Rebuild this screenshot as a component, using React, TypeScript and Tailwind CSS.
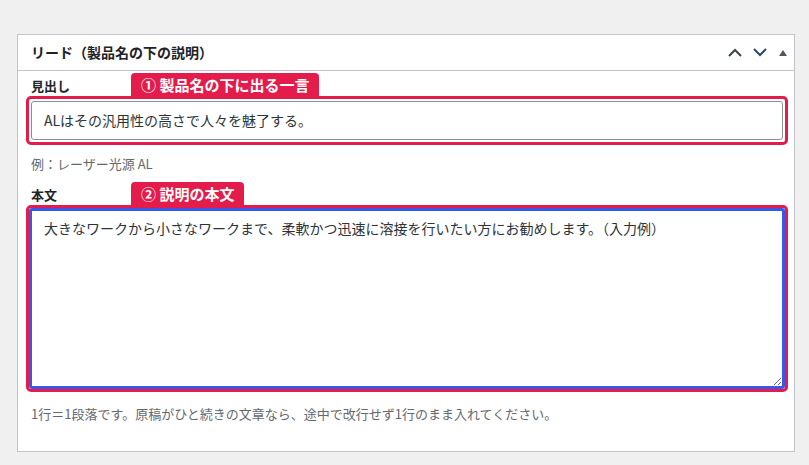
const jp = { fontFamily: '"Noto Sans CJK JP", "Noto Sans", sans-serif' };

function ChevronUp() {
  return (
    <svg width="14" height="9" viewBox="0 0 14 9" className="block">
      <polyline points="1,8 7,2 13,8" fill="none" stroke="#3c434a" strokeWidth="2" />
    </svg>
  );
}

function ChevronDown() {
  return (
    <svg width="14" height="9" viewBox="0 0 14 9" className="block">
      <polyline points="1,1 7,7 13,1" fill="none" stroke="#2c4a66" strokeWidth="2" />
    </svg>
  );
}

function Tag({ children }: { children: React.ReactNode }) {
  return (
    <span className="flex h-[23px] items-center rounded-t-[4px] bg-[#e31c4b] px-[10px] text-[15px] font-bold leading-none text-white">
      {children}
    </span>
  );
}

export default function App() {
  return (
    <div className="min-h-[465px] bg-[#f0f0f0] px-[17px] pt-[34px]" style={jp}>
      <div className="w-[778px] border border-[#c3c4c7] bg-white">
        {/* header */}
        <div className="flex h-[36px] items-center justify-between border-b border-[#c3c4c7] pl-[13px] pr-[7px]">
          <h2 className="text-[14px] font-bold text-[#1d2327]">リード（製品名の下の説明）</h2>
          <div className="flex items-center">
            <ChevronUp />
            <span className="ml-[11px]">
              <ChevronDown />
            </span>
            <span className="ml-[12px] block h-0 w-0 border-x-[4px] border-b-[6px] border-x-transparent border-b-[#50575e]" />
          </div>
        </div>

        {/* body */}
        <div className="px-[8px] pb-[27px] pt-[2px]">
          <div className="flex items-end">
            <span className="mb-[1px] ml-[5px] w-[100px] text-[13px] font-bold text-[#1d2327]">見出し</span>
            <Tag>① 製品名の下に出る一言</Tag>
          </div>
          <div className="w-[762px] rounded-[5px] border-[3px] border-[#e31c4b] p-[2px]">
            <div className="flex h-[39px] items-center rounded-[3px] border border-[#8c8f94] px-[12px] text-[14px] text-[#2c3338]">
              ALはその汎用性の高さで人々を魅了する。
            </div>
          </div>
          <p className="ml-[5px] mt-[9px] text-[13px] leading-[20px] text-[#646970]">例：レーザー光源 AL</p>

          <div className="mt-[8px] flex items-end">
            <span className="mb-[1px] ml-[5px] w-[100px] text-[13px] font-bold text-[#1d2327]">本文</span>
            <Tag>② 説明の本文</Tag>
          </div>
          <div className="w-[762px] rounded-[5px] border-[3px] border-[#e31c4b]">
            <textarea
              className="block h-[181px] w-full rounded-[3px] border-[3px] border-[#3858e9] px-[12px] pt-[7px] text-[14px] leading-[20px] text-[#2c3338] outline-none"
              style={jp}
              defaultValue="大きなワークから小さなワークまで、柔軟かつ迅速に溶接を行いたい方にお勧めします。（入力例）"
            />
          </div>
          <p className="ml-[5px] mt-[12px] text-[13px] leading-[20px] text-[#646970]">
            1行＝1段落です。原稿がひと続きの文章なら、途中で改行せず1行のまま入れてください。
          </p>
        </div>
      </div>
    </div>
  );
}
